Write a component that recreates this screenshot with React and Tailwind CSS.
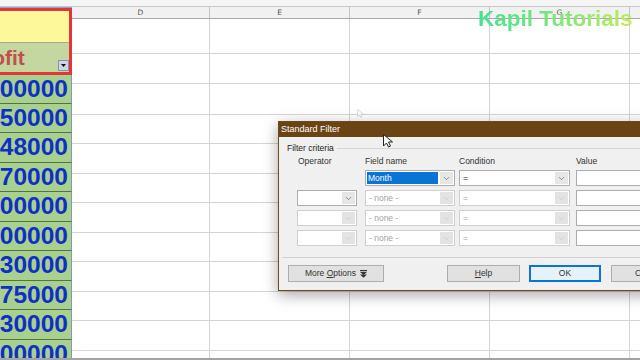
import React from "react";
import { ChevronDown } from "lucide-react";

const numbers = ["100000", "150000", "148000", "170000", "200000", "100000", "130000", "175000", "130000", "200000"];
const otherCols = [
  { label: "D", w: "w-[138px]" },
  { label: "E", w: "w-[140px]" },
  { label: "F", w: "w-[140px]" },
  { label: "G", w: "w-[140px]" },
  { label: "", w: "w-[40px]" },
];
const rowHeights = ["h-[35px]", "h-[30px]", "h-[30.5px]", "h-[29.5px]", "h-[29.5px]", "h-[29.5px]", "h-[29.5px]", "h-[29.5px]", "h-[29.5px]", "h-[29.5px]", "h-[29.5px]", "h-[29.5px]"];

const Combo = ({ width, text, disabled, selected }) => (
  <div
    className={`flex h-[16px] ${width} shrink-0 items-stretch border bg-white ${
      disabled ? "border-[#cfcfcf]" : "border-[#adadad]"
    }`}
  >
    <div className="flex min-w-0 flex-1 items-center p-px">
      {selected ? (
        <span className="flex h-full w-full items-center bg-[#0a74d6] pl-px text-white">{text}</span>
      ) : (
        <span className={`pl-[2px] ${disabled ? "text-[#a3a3a3]" : "text-[#222]"}`}>{text}</span>
      )}
    </div>
    <div
      className={`m-px flex w-[13px] items-center justify-center ${
        disabled ? "bg-[#e3e3e3] text-[#c4c4c4]" : "bg-[#e6e6e6] text-[#555]"
      }`}
    >
      <ChevronDown size={9} strokeWidth={1.6} />
    </div>
  </div>
);

const ValueBox = () => <div className="h-[16px] w-[80px] shrink-0 border border-[#adadad] bg-white" />;

const CriteriaRow = ({ first, opEnabled }) => (
  <div className="flex items-center">
    <div className="mr-[8px] w-[60px] shrink-0">
      {first ? <div className="h-[16px]" /> : <Combo width="w-[60px]" text="" disabled={!opEnabled} />}
    </div>
    <div className="mr-[4px] shrink-0">
      {first ? (
        <Combo width="w-[90px]" text="Month" selected />
      ) : (
        <Combo width="w-[90px]" text="- none -" disabled />
      )}
    </div>
    <div className="mr-[6px] shrink-0">
      <Combo width="w-[111px]" text="=" disabled={!first} />
    </div>
    <ValueBox />
  </div>
);

const StandardFilter = () => (
  <div className="absolute left-[278px] top-[121px] flex h-[170px] w-[380px] flex-col border border-[#6b4a1e] bg-[#f0f0f0] text-[8.5px] text-[#222] shadow-[0_4px_14px_rgba(0,0,0,0.35)]">
    <div className="h-[15px] bg-[#6a4413] pl-[2px] text-[9px] leading-[15px] text-white">Standard Filter</div>
    <div className="flex flex-1 flex-col pt-[5px]">
      <div className="flex h-[12px] items-center pl-[8px]">
        <span>Filter criteria</span>
        <div className="ml-[3px] h-px flex-1 bg-[#d5d5d5]" />
      </div>
      <div className="mt-[1px] flex h-[12px] items-center pl-[18px] text-[#333]">
        <span className="w-[68px] shrink-0 pl-px">Operator</span>
        <span className="w-[94px] shrink-0">Field name</span>
        <span className="w-[117px] shrink-0">Condition</span>
        <span>Value</span>
      </div>
      <div className="mt-[3px] flex flex-col gap-[4px] pl-[18px]">
        <CriteriaRow first />
        <CriteriaRow opEnabled />
        <CriteriaRow />
        <CriteriaRow />
      </div>
      <div className="ml-[3px] mt-[11px] h-px bg-[#d3d3d3]" />
      <div className="mt-[7px] flex pl-[9px]">
        <button className="flex h-[17px] w-[96px] shrink-0 items-center justify-center gap-[4px] border border-[#adadad] bg-[#e1e1e1] text-[8.5px] text-[#333]">
          <span>
            More <span className="underline">O</span>ptions
          </span>
          <svg width="7" height="8" viewBox="0 0 7 8">
            <rect x="0" y="0" width="7" height="1.2" fill="#333" />
            <path d="M0 2 L7 2 L3.5 5 Z" fill="#333" />
            <path d="M0 4.6 L7 4.6 L3.5 7.8 Z" fill="#333" />
          </svg>
        </button>
        <button className="ml-[63px] flex h-[17px] w-[73px] shrink-0 items-center justify-center border border-[#adadad] bg-[#e1e1e1] text-[8.5px] text-[#333]">
          <span>
            <span className="underline">H</span>elp
          </span>
        </button>
        <button className="ml-[9px] flex h-[17px] w-[72px] shrink-0 items-center justify-center border border-[#0a74d6] bg-[#e5f1fb] text-[8.5px] text-[#333] shadow-[inset_0_0_0_1px_#0a74d6]">
          OK
        </button>
        <button className="ml-[10px] flex h-[17px] w-[72px] shrink-0 items-center justify-start border border-[#adadad] bg-[#e1e1e1] pl-[23px] text-[8.5px] text-[#333]">
          Cancel
        </button>
      </div>
    </div>
  </div>
);

export default function App() {
  return (
    <div className="relative h-[360px] w-[640px] overflow-hidden bg-white font-['Liberation_Sans']">
      <div className="h-[7px] border-b border-[#c9c9c9] bg-[#f5f5f5]" />
      <div className="flex h-[351px] overflow-hidden">
        {/* column C */}
        <div className="flex w-[72px] shrink-0 flex-col">
          <div className="h-[12px] overflow-hidden border-b border-[#8aa6c6] bg-[#2f7fd6] text-[8px] leading-[11px] text-white">
            <span className="ml-[-2px]">C</span>
          </div>
          <div className="flex h-[67px] flex-col border-y-[3px] border-r-[3px] border-[#e2373a]">
            <div className="h-[32px] border-b border-[#a8a88a] bg-[#fdf99b]" />
            <div className="relative flex flex-1 items-center overflow-hidden bg-[#c4d7a0]">
              <span className="ml-[-30px] shrink-0 whitespace-nowrap text-[21px] font-bold text-[#c0504d]">Profit</span>
              <div className="absolute bottom-[1px] right-0 flex h-[11px] w-[11px] items-center justify-center border border-[#8593ad] bg-[#cdd6e8]">
                <svg width="5" height="3" viewBox="0 0 5 3">
                  <path d="M0 0 L5 0 L2.5 3 Z" fill="#111" />
                </svg>
              </div>
            </div>
          </div>
          {numbers.map((n, i) => (
            <div
              key={i}
              className={`flex ${i === 0 ? "h-[28.5px]" : "h-[29.5px]"} shrink-0 items-center justify-end overflow-hidden border-b border-r border-b-[#55704c] border-r-[#7b9bb8] bg-[#a9d18e] pr-[3px]`}
            >
              <span className="shrink-0 whitespace-nowrap font-['Liberation_Sans'] text-[24.5px] font-bold leading-none text-[#0f30c6]">
                {n}
              </span>
            </div>
          ))}
        </div>
        {/* columns D.. */}
        <div className="flex flex-1 flex-col">
          <div className="flex h-[12px] shrink-0 border-b border-[#a8a8a8] bg-[#f1f1f1]">
            {otherCols.map((c, i) => (
              <div
                key={i}
                className={`${c.w} shrink-0 border-r border-[#c4c4c4] text-center font-['DejaVu_Sans'] text-[7.5px] leading-[11px] text-[#555]`}
              >
                {c.label}
              </div>
            ))}
          </div>
          {rowHeights.map((h, r) => (
            <div key={r} className={`flex ${h} shrink-0 border-b border-[#d4d4d4]`}>
              {otherCols.map((c, i) => (
                <div key={i} className={`${c.w} shrink-0 border-r border-[#d4d4d4]`} />
              ))}
            </div>
          ))}
        </div>
      </div>
      <div className="h-[2px] bg-[#a3a3a3]" />

      <div className="absolute left-[478px] top-[8px] bg-linear-to-r from-[#3fe38f] via-[#7be678] to-[#bdec5c] bg-clip-text text-[22.5px] font-bold leading-none text-transparent">
        Kapil Tutorials
      </div>

      <svg className="absolute left-[357px] top-[109px]" width="7" height="9" viewBox="0 0 10 14">
        <path d="M0.5 0.5 L0.5 12 L3.5 9 L5.5 13 L7.5 12 L5.5 8 L9.5 8 Z" fill="white" stroke="#c8c8c8" strokeWidth="1" />
      </svg>

      <StandardFilter />

      <svg className="absolute left-[383px] top-[134px]" width="10" height="14" viewBox="0 0 10 14">
        <path d="M0.5 0.5 L0.5 12 L3.5 9 L5.5 13 L7.5 12 L5.5 8 L9.5 8 Z" fill="white" stroke="#222" strokeWidth="1" />
      </svg>
    </div>
  );
}
